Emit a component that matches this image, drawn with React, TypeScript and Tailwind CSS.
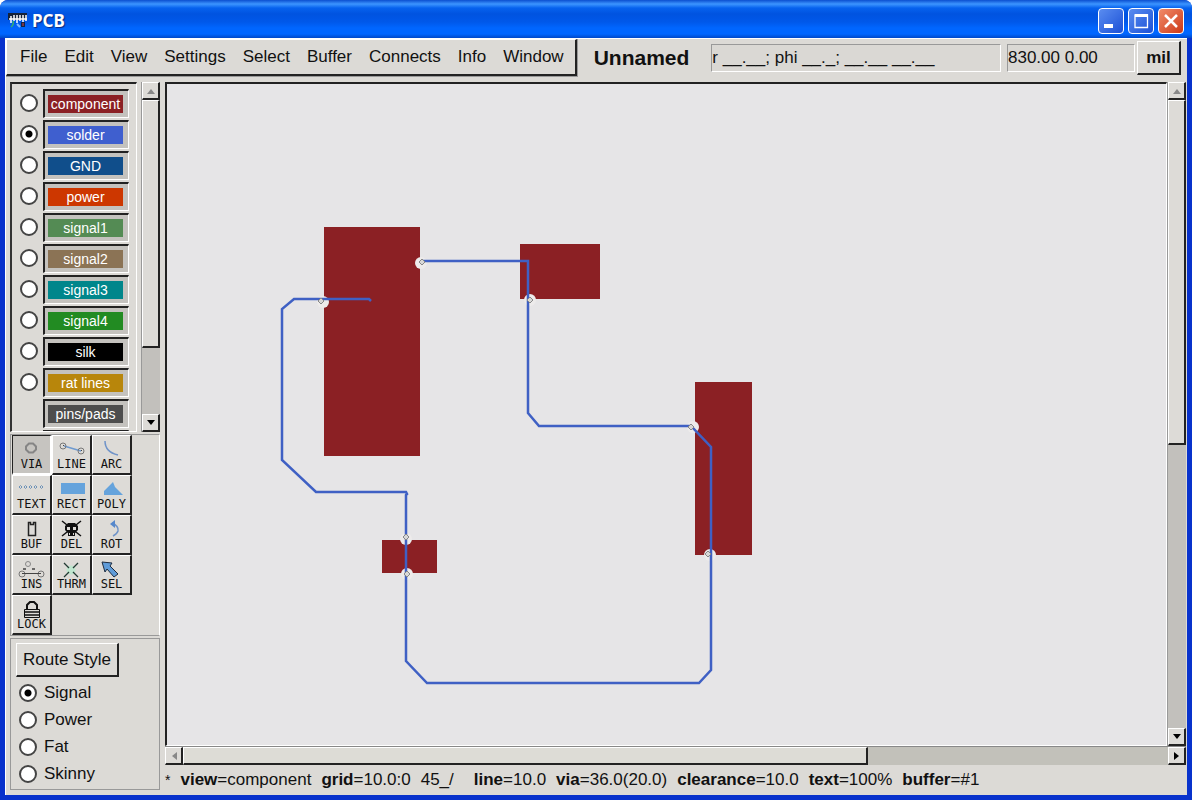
import { useState } from 'react'
import type { ReactNode } from 'react'
import clsx from 'clsx'

type Layer = {
  name: string
  color: string
}

const MENUS = ['File', 'Edit', 'View', 'Settings', 'Select', 'Buffer', 'Connects', 'Info', 'Window']

const LAYERS: Layer[] = [
  { name: 'component', color: 'bg-[#8b2024]' },
  { name: 'solder', color: 'bg-[#3f5fcf]' },
  { name: 'GND', color: 'bg-[#104e8b]' },
  { name: 'power', color: 'bg-[#cd3700]' },
  { name: 'signal1', color: 'bg-[#548b54]' },
  { name: 'signal2', color: 'bg-[#8b7355]' },
  { name: 'signal3', color: 'bg-[#00868b]' },
  { name: 'signal4', color: 'bg-[#228b22]' },
  { name: 'silk', color: 'bg-black' },
  { name: 'rat lines', color: 'bg-[#b8860b]' },
]

const ROUTE_STYLES = ['Signal', 'Power', 'Fat', 'Skinny']

const RAISED = 'border-t border-l border-r-2 border-b-2 border-t-white border-l-white border-r-[#222] border-b-[#222]'

// Tool glyphs, each on a 37x22 grid
const TOOLS: { name: string; icon: ReactNode }[] = [
  {
    name: 'VIA',
    icon: <path d="M16 7.500h4l3 3v3l-3 3h-4l-3-3v-3z" stroke="#858585" strokeWidth="2" />,
  },
  {
    name: 'LINE',
    icon: (
      <>
        <path d="M11 10L28 15" stroke="#6f9bd0" strokeWidth="1.5" />
        <circle cx="10" cy="10" r="3" stroke="#777" />
        <circle cx="28" cy="15" r="3" stroke="#777" />
        <path d="M10 9.500h1M28 14.500h1" stroke="#444" />
      </>
    ),
  },
  {
    name: 'ARC',
    icon: <path d="M12 5Q12 16 25 19" stroke="#6f93c8" strokeWidth="1.5" />,
  },
  {
    name: 'TEXT',
    icon: (
      <path
        d="M6 11l1.500-1.500L9 11l-1.500 1.500zM11 11l1.500-1.500L14 11l-1.500 1.500zM16 11l1.500-1.500L19 11l-1.500 1.500zM21 11l1.500-1.500L24 11l-1.500 1.500zM27 11l1.500-1.500L30 11l-1.500 1.500z"
        stroke="#6f93b8"
      />
    ),
  },
  {
    name: 'RECT',
    icon: <rect x="8" y="7" width="24" height="11" fill="#65a3dc" />,
  },
  {
    name: 'POLY',
    icon: <path d="M11 19v-4L20 6l2 5 8 8z" fill="#65a3dc" />,
  },
  {
    name: 'BUF',
    icon: <path d="M15.500 6.500h2v2h3v-2h2v13h-7z" stroke="#222" strokeWidth="1.500" />,
  },
  {
    name: 'DEL',
    icon: (
      <>
        <path d="M9 5L28 20M28 5L9 20" stroke="#111" strokeWidth="1.5" />
        <path d="M12 10l3-3h7l3 3v4l-3 3v3h-7v-3l-3-3z" fill="#111" />
        <path d="M14 11h3v3h-3zM20 11h3v3h-3zM16 17h1v2h-1zM20 17h1v2h-1z" fill="#dcdad6" />
      </>
    ),
  },
  {
    name: 'ROT',
    icon: (
      <>
        <path d="M19 7q7 3 6 8q-1 3-5 5" stroke="#6f93c8" strokeWidth="1.5" />
        <path d="M17 8l5-4v8z" fill="#5588cc" />
      </>
    ),
  },
  {
    name: 'INS',
    icon: (
      <>
        <circle cx="15" cy="8" r="2.500" stroke="#888" />
        <path d="M10 13h3M19 13h3" stroke="#444" strokeWidth="1.5" />
        <circle cx="9" cy="18" r="3" stroke="#777" />
        <circle cx="28" cy="18" r="3" stroke="#777" />
        <path d="M9 17.500h19" stroke="#444" />
      </>
    ),
  },
  {
    name: 'THRM',
    icon: (
      <>
        <circle cx="18" cy="14" r="4.500" fill="#bfe6cf" />
        <path d="M11 7l5 5M25 7l-5 5M11 21l5-5M25 21l-5-5" stroke="#223a33" strokeWidth="1.300" />
      </>
    ),
  },
  {
    name: 'SEL',
    icon: <path d="M9 6l10 1-2 3 8 8-4 3-7-8-2 3z" fill="#5e9bd8" stroke="#1d2c40" />,
  },
  {
    name: 'LOCK',
    icon: (
      <>
        <path d="M14 14V9l3-3h4l3 3v5" stroke="#111" strokeWidth="2" />
        <path d="M11.500 13.500h15v8h-15z" stroke="#111" />
        <path d="M11 16h16M11 19h16" stroke="#111" strokeWidth="1.5" />
      </>
    ),
  },
]

// Board geometry in screen units of the drawing area
const PADS = [
  [157, 143, 96, 229],
  [353, 160, 80, 55],
  [528, 298, 57, 173],
  [215, 456, 55, 33],
]

const TRACES = [
  'M204 217L202 215H127L115 225V376L149 408H239L240 410L239 411V577L260 599H532L544 586V363L524 342H372L361 329V178',
  'M254 178L256 177H361V178',
]

// Drill mark plus the centre of the clearance cut into the pad
const VIAS = [
  { x: 255, y: 178, cx: 254, cy: 179 },
  { x: 154, y: 217, cx: 156, cy: 218 },
  { x: 363, y: 216, cx: 363, cy: 216 },
  { x: 524, y: 343, cx: 526, cy: 343 },
  { x: 541, y: 470, cx: 543, cy: 471 },
  { x: 239, y: 453, cx: 239, cy: 455 },
  { x: 240, y: 490, cx: 240, cy: 490 },
]

const Arrow = ({ dir, muted }: { dir: 'up' | 'down' | 'left' | 'right'; muted?: boolean }) => (
  <svg
    viewBox="0 0 10 10"
    className={clsx('size-[10px]', {
      'rotate-180': dir === 'down',
      '-rotate-90': dir === 'left',
      'rotate-90': dir === 'right',
    })}
  >
    <path d="M1 8L5 3L9 8z" fill={muted ? '#888' : '#000'} />
  </svg>
)

const ARROW_BUTTON =
  'flex size-[18px] shrink-0 items-center justify-center border-t border-l border-r-2 border-b-2 border-t-white border-l-white border-r-[#222] border-b-[#222] bg-[#dddbd7]'

const VScroll = ({ thumb, label }: { thumb: string; label: string }) => (
  <div className="flex w-[19px] shrink-0 flex-col items-stretch border-l border-[#999] bg-[#c2c0bc]">
    <button type="button" aria-label={`${label} up`} className={ARROW_BUTTON}>
      <Arrow dir="up" muted />
    </button>
    <div className="min-h-0 flex-1">
      <div className={clsx('bg-[#dddbd7]', RAISED, thumb)} />
    </div>
    <button type="button" aria-label={`${label} down`} className={ARROW_BUTTON}>
      <Arrow dir="down" />
    </button>
  </div>
)

const HScroll = () => (
  <div className="flex h-[19px] items-stretch border-t border-[#888] bg-[#c2c1ba]">
    <button type="button" aria-label="Board left" className={ARROW_BUTTON}>
      <Arrow dir="left" muted />
    </button>
    <div className="flex min-w-0 flex-1">
      <div className={clsx('w-[69.5%] bg-[#dddcd6]', RAISED)} />
    </div>
    <button type="button" aria-label="Board right" className={ARROW_BUTTON}>
      <Arrow dir="right" />
    </button>
  </div>
)

const RADIO =
  'size-[18px] shrink-0 appearance-none rounded-full border-2 border-[#444] bg-white checked:bg-[radial-gradient(circle,#000_3px,#fff_4px)]'

const SWATCH_BOX =
  'block h-[29px] w-[86px] border-t-2 border-r border-b border-l-2 border-t-[#222] border-r-white border-b-white border-l-[#222] bg-[#c4c2be] py-1 pr-[5px] pl-[3px]'

const Swatch = ({ name, color }: Layer) => (
  <span className={clsx('block h-[18px] text-center text-[14px] leading-[18px] text-white', color)}>
    {name}
  </span>
)

const TitleBar = () => (
  <header className="flex h-[38px] shrink-0 items-center gap-1 rounded-t-lg bg-[linear-gradient(to_bottom,#0b4fd0_0px,#3c95ff_4px,#0662ee_8px,#0053e0_14px,#0058ea_22px,#0066ff_28px,#0066ff_34px,#0048c8_38px)] pt-1 pr-2 pl-2">
    <svg viewBox="0 0 20 16" className="h-4 w-5">
      <path d="M0 0h19v7H0z" fill="#152238" />
      <path d="M1 6h18M3 3v7M6 2v6M9 2v8M12 2v6M15 2v7M18 2v6" stroke="#fff" strokeWidth="1.5" />
      <path d="M5 8q1 4-2 6" stroke="#35b070" fill="none" strokeWidth="1.5" />
      <path d="M9 11l3 3" stroke="#7db7ff" strokeWidth="2" />
      <path d="M13 9h4v5h-4z" fill="#10254a" />
      <path d="M15 10v3" stroke="#d44" />
    </svg>
    <h1 className="flex-1 font-['Noto_Sans',sans-serif] text-[17px] leading-5 font-bold text-white [text-shadow:1px_1px_1px_#0a2a80]">
      PCB
    </h1>
    <div className="flex gap-1">
      <button
        type="button"
        aria-label="Minimize"
        className="flex size-[26px] items-center justify-center rounded border border-white bg-linear-to-br from-[#5a8cf0] to-[#1c4fd6]"
      >
        <svg viewBox="0 0 20 20" className="size-5">
          <path d="M3 13h9v4H3z" fill="#fff" />
        </svg>
      </button>
      <button
        type="button"
        aria-label="Maximize"
        className="flex size-[26px] items-center justify-center rounded border border-white bg-linear-to-br from-[#5a8cf0] to-[#1c4fd6]"
      >
        <svg viewBox="0 0 20 20" className="size-5" fill="none" stroke="#fff">
          <path d="M4 4.500h13" strokeWidth="3" />
          <path d="M4 4h12.500v12.500H4z" strokeWidth="1.300" />
        </svg>
      </button>
      <button
        type="button"
        aria-label="Close"
        className="flex size-[26px] items-center justify-center rounded border border-white bg-linear-to-br from-[#f08a68] to-[#cc3510]"
      >
        <svg viewBox="0 0 20 20" className="size-5">
          <path d="M4 4l12 12M16 4L4 16" stroke="#fff" strokeWidth="2.500" />
        </svg>
      </button>
    </div>
  </header>
)

const FIELD =
  'h-7 border border-t-[#999] border-r-white border-b-white border-l-[#999] bg-[#dad8d4] outline-none'

const TopBar = () => (
  <div className="flex h-[38px] shrink-0 items-stretch pr-[6px]">
    <nav className="border-r border-b border-[#999]">
      <div className={clsx('flex h-full items-center gap-px pr-[3px] pl-[5px]', RAISED)}>
        {MENUS.map((menu) => (
          <button key={menu} type="button" className="px-2 leading-6">
            {menu}
          </button>
        ))}
      </div>
    </nav>
    <div className="flex flex-1 items-center pl-4">
      <h2 className="text-[21px] leading-6 font-bold">Unnamed</h2>
      <input
        readOnly
        aria-label="Relative position"
        value="r __.__; phi __._; __.__ __.__"
        className={clsx('ml-[22px] min-w-0 flex-1', FIELD)}
      />
      <input
        readOnly
        aria-label="Cursor position"
        value="830.00 0.00"
        className={clsx('ml-[6px] w-[128px]', FIELD)}
      />
      <button type="button" className={clsx('ml-[2px] h-[34px] w-[44px] font-bold', RAISED)}>
        mil
      </button>
    </div>
  </div>
)

const LayerPanel = () => {
  const [active, setActive] = useState('solder')

  return (
    <div className="flex h-[350px] gap-[4px]">
      <div className="flex-1 overflow-hidden border-t-2 border-r border-b border-l-2 border-t-[#222] border-r-white border-b-white border-l-[#333] pt-[5px] pl-2">
        {LAYERS.map((layer) => (
          <label key={layer.name} className="flex h-[31px] items-start gap-[5px]">
            <input
              type="radio"
              name="layer"
              checked={active === layer.name}
              onChange={() => setActive(layer.name)}
              className={clsx('mt-[5px]', RADIO)}
            />
            <span className={SWATCH_BOX}>
              <Swatch {...layer} />
            </span>
          </label>
        ))}
        <div className="h-[31px] pl-[23px]">
          <button type="button" className={SWATCH_BOX}>
            <Swatch name="pins/pads" color="bg-[#4d4d4d]" />
          </button>
        </div>
        <div className="pl-[23px]">
          <div className={SWATCH_BOX} />
        </div>
      </div>
      <VScroll label="Layers" thumb="h-[79%]" />
    </div>
  )
}

const ToolPanel = () => {
  const [tool, setTool] = useState('VIA')

  return (
    <div className="mt-[2px] border border-t-[#999] border-r-white border-b-[#999] border-l-[#999]">
      <div className="grid w-fit grid-cols-[40px_40px_40px] pl-px">
        {TOOLS.map(({ name, icon }) => (
          <button
            key={name}
            type="button"
            aria-pressed={tool === name}
            onClick={() => setTool(name)}
            className={clsx(
              'flex h-[40px] flex-col items-center border-t border-r-2 border-b-2 border-l',
              tool === name
                ? 'border-t-[#222] border-r-white border-b-white border-l-[#222] bg-[#c6c4c0]'
                : 'border-t-white border-r-[#222] border-b-[#222] border-l-white bg-[#dddbd7]',
            )}
          >
            <svg viewBox="0 0 37 22" fill="none" className="h-[22px] w-[37px] shrink-0">
              {icon}
            </svg>
            <span className="font-['DejaVu_Sans_Mono',monospace] text-[12px] leading-[12px]">{name}</span>
          </button>
        ))}
      </div>
    </div>
  )
}

const RoutePanel = () => {
  const [style, setStyle] = useState('Signal')

  return (
    <div className="mt-[2px] flex-1 border border-[#999] pt-1 pl-[5px]">
      <button type="button" className={clsx('h-[34px] px-[6px]', RAISED)}>
        Route Style
      </button>
      <div className="mt-[2px] pl-[3px]">
        {ROUTE_STYLES.map((name) => (
          <label key={name} className="flex h-[27px] items-center gap-[7px]">
            <input
              type="radio"
              name="route-style"
              checked={style === name}
              onChange={() => setStyle(name)}
              className={RADIO}
            />
            {name}
          </label>
        ))}
      </div>
    </div>
  )
}

const Board = () => (
  <svg
    role="img"
    aria-label="Board layout"
    className="min-w-0 flex-1 border-t-2 border-r border-b border-l-2 border-t-[#222] border-r-white border-b-white border-l-[#222] bg-[#e6e5e7]"
    fill="none"
  >
    {PADS.map(([x, y, width, height]) => (
      <rect key={`${x}-${y}`} x={x} y={y} width={width} height={height} fill="#8b2024" />
    ))}
    {VIAS.map(({ cx, cy }) => (
      <circle key={`${cx}-${cy}`} cx={cx} cy={cy} r="6" fill="#edebeb" />
    ))}
    {TRACES.map((d) => (
      <path key={d} d={d} stroke="#3f60c4" strokeWidth="2.500" />
    ))}
    {VIAS.map(({ x, y }) => (
      <path key={`${x}-${y}`} d={`M${x - 3} ${y}l3-3 3 3-3 3z`} fill="#d8d8d8" stroke="#888" />
    ))}
  </svg>
)

const StatusItem = ({ name, value }: { name: string; value: string }) => (
  <span>
    <b>{name}</b>={value}
  </span>
)

const StatusBar = () => (
  <footer className="flex h-[30px] items-center gap-[10px] whitespace-nowrap">
    <span className="text-[14px]">*</span>
    <StatusItem name="view" value="component" />
    <StatusItem name="grid" value="10.0:0" />
    <span className="pr-[10px]">45_/</span>
    <StatusItem name="line" value="10.0" />
    <StatusItem name="via" value="36.0(20.0)" />
    <StatusItem name="clearance" value="10.0" />
    <StatusItem name="text" value="100%" />
    <StatusItem name="buffer" value="#1" />
  </footer>
)

export default function App() {
  return (
    <div className="flex min-h-screen flex-col rounded-t-lg bg-[#0838d0] font-['Liberation_Sans',Arial,sans-serif] text-[17px] leading-6 text-[#111]">
      <TitleBar />
      <div className="flex flex-1 flex-col border-r-[5px] border-b-[5px] border-l-[5px] border-[#0832cc]">
        <div className="flex flex-1 flex-col border-t border-l border-white bg-[#dcdad6]">
          <TopBar />
          <main className="flex flex-1 pt-[5px] pr-px">
            <aside className="mr-[5px] ml-[4px] flex w-[150px] shrink-0 flex-col pb-[5px]">
              <LayerPanel />
              <ToolPanel />
              <RoutePanel />
            </aside>
            <section className="flex min-w-0 flex-1 flex-col">
              <div className="flex flex-1">
                <Board />
                <VScroll label="Board" thumb="h-[55%]" />
              </div>
              <HScroll />
              <StatusBar />
            </section>
          </main>
        </div>
      </div>
    </div>
  )
}
